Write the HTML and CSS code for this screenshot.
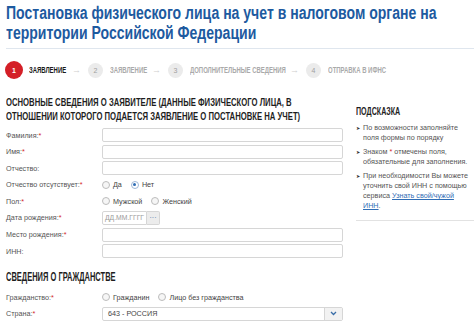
FILE: index.html
```html
<!DOCTYPE html>
<html lang="ru">
<head>
<meta charset="utf-8">
<title>Постановка физического лица на учет</title>
<link rel="stylesheet" href="styles.css">
</head>
<body>
<div class="page">
  <h1 class="title">
    <span class="tline">Постановка физического лица на учет в налоговом органе на</span>
    <span class="tline">территории Российской Федерации</span>
  </h1>
  <div class="steps">
    <span class="step-num active">1</span>
    <span class="step-label w1"><span class="sq">ЗАЯВЛЕНИЕ</span></span>
    <span class="arrow">→</span>
    <span class="step-num">2</span>
    <span class="step-label w2 muted"><span class="sq">ЗАЯВЛЕНИЕ</span></span>
    <span class="arrow">→</span>
    <span class="step-num">3</span>
    <span class="step-label w3 muted"><span class="sq">ДОПОЛНИТЕЛЬНЫЕ СВЕДЕНИЯ</span></span>
    <span class="arrow">→</span>
    <span class="step-num">4</span>
    <span class="step-label w4 muted"><span class="sq">ОТПРАВКА В ИФНС</span></span>
  </div>
  <div class="content">
    <div class="main">
      <h2 class="section">
        <span class="sline">ОСНОВНЫЕ СВЕДЕНИЯ О ЗАЯВИТЕЛЕ (ДАННЫЕ ФИЗИЧЕСКОГО ЛИЦА, В</span>
        <span class="sline">ОТНОШЕНИИ КОТОРОГО ПОДАЕТСЯ ЗАЯВЛЕНИЕ О ПОСТАНОВКЕ НА УЧЕТ)</span>
      </h2>
      <div class="form">
        <div class="label">Фамилия:<span class="req">*</span></div><div class="input"></div>
        <div class="label">Имя:<span class="req">*</span></div><div class="input"></div>
        <div class="label">Отчество:</div><div class="input"></div>
        <div class="label">Отчество отсутствует:<span class="req">*</span></div>
        <div class="radios"><span class="radio"></span><span class="rlabel">Да</span><span class="radio checked"></span><span class="rlabel">Нет</span></div>
        <div class="label">Пол:<span class="req">*</span></div>
        <div class="radios"><span class="radio"></span><span class="rlabel">Мужской</span><span class="radio"></span><span class="rlabel">Женский</span></div>
        <div class="label">Дата рождения:<span class="req">*</span></div>
        <div class="date"><span class="date-input">ДД.ММ.ГГГГ</span><span class="date-btn">···</span></div>
        <div class="label">Место рождения:<span class="req">*</span></div><div class="input"></div>
        <div class="label">ИНН:</div><div class="input"></div>
      </div>
      <h2 class="section section2"><span class="sline s2">СВЕДЕНИЯ О ГРАЖДАНСТВЕ</span></h2>
      <div class="form">
        <div class="label">Гражданство:<span class="req">*</span></div>
        <div class="radios"><span class="radio"></span><span class="rlabel">Гражданин</span><span class="radio"></span><span class="rlabel">Лицо без гражданства</span></div>
        <div class="label">Страна:<span class="req">*</span></div>
        <div class="select"><span class="select-text">643 - РОССИЯ</span><span class="select-btn"><svg width="7" height="5" viewBox="0 0 7 5"><path d="M1 1 L3.5 3.5 L6 1" fill="none" stroke="#3a6ea8" stroke-width="1.3"/></svg></span></div>
      </div>
    </div>
    <aside class="hint">
      <h3 class="hint-title"><span class="hq">ПОДСКАЗКА</span></h3>
      <ul class="hint-list">
        <li>По возможности заполняйте поля формы по порядку</li>
        <li>Знаком <span class="req">*</span> отмечены поля, обязательные для заполнения.</li>
        <li>При необходимости Вы можете уточнить свой ИНН с помощью сервиса <a href="#">Узнать свой/чужой ИНН</a>.</li>
      </ul>
    </aside>
  </div>
</div>
</body>
</html>
```
FILE: styles.css
```css
html, body {
  margin: 0;
  padding: 0;
  background: #fff;
}
.page {
  padding-left: 6px;
  font-family: "Liberation Sans", Arial, sans-serif;
  color: #444;
  overflow: hidden;
}
.title {
  margin: 0;
  padding: 3px 0 5px 0;
  font-family: "Liberation Sans", Arial, sans-serif;
  font-weight: bold;
  font-size: 18px;
  line-height: 20px;
  color: #1d5aa0;
  border-bottom: 1px solid #dfe6ee;
}
.tline {
  display: block;
  white-space: nowrap;
  transform: scaleX(0.78);
  transform-origin: 0 50%;
}
.steps {
  display: flex;
  align-items: center;
  height: 20px;
  margin-top: 11px;
  margin-left: -1px;
  font-size: 8.5px;
  font-weight: bold;
}
.step-num {
  flex: none;
  width: 15px;
  height: 15px;
  border-radius: 50%;
  background: #ebebeb;
  color: #a0a0a0;
  display: flex;
  align-items: center;
  justify-content: center;
  font-size: 7px;
  font-weight: normal;
  margin-right: 7px;
}
.step-num.active {
  width: 18px;
  height: 18px;
  background: #d41f27;
  color: #fff;
  font-weight: bold;
  margin-right: 6px;
}
.step-label {
  flex: none;
  white-space: nowrap;
  color: #1a1a1a;
}
.step-label.muted {
  color: #aaa;
}
.sq {
  display: inline-block;
  transform: scaleX(0.7);
  transform-origin: 0 50%;
}
.w1 { width: 38px; }
.w2 { width: 37px; }
.w3 { width: 95px; }
.w4 { width: 61px; }
.arrow {
  flex: none;
  width: 8px;
  color: #cfcfcf;
  font-size: 9px;
  font-weight: normal;
  margin: 0 8px 0 5px;
}
.content {
  display: flex;
  margin-top: 16px;
}
.main {
  flex: none;
  width: 337px;
}
.section {
  margin: 0;
  font-weight: bold;
  font-size: 11.5px;
  line-height: 13.5px;
  color: #1e1e1e;
}
.sline {
  display: block;
  white-space: nowrap;
  transform: scaleX(0.67);
  transform-origin: 0 50%;
}
.section2 {
  margin-top: 11px;
  font-size: 12.5px;
  line-height: 16px;
}
.s2 {
  transform: scaleX(0.6);
}
.form {
  display: grid;
  grid-template-columns: 96px 241px;
  grid-auto-rows: 14px;
  row-gap: 2.6px;
  margin-top: 5px;
  align-items: center;
}
.label {
  font-size: 7.2px;
  color: #555;
  white-space: nowrap;
}
.req {
  color: #d41f27;
}
.input {
  box-sizing: border-box;
  height: 14px;
  border: 1px solid #d6d6d6;
  border-radius: 2px;
  background: #fff;
}
.radios {
  display: flex;
  align-items: center;
  font-size: 7.2px;
  color: #444;
}
.radio {
  flex: none;
  width: 6px;
  height: 6px;
  border: 1px solid #bcbcbc;
  border-radius: 50%;
  margin: 0 3px 0 0;
  position: relative;
  background: #f6f6f6;
}
.radio.checked {
  border-color: #9fb8d8;
  background: #fff;
}
.radio.checked::after {
  content: "";
  position: absolute;
  left: 1.5px;
  top: 1.5px;
  width: 3px;
  height: 3px;
  border-radius: 50%;
  background: #2f6db5;
}
.rlabel {
  margin-right: 9px;
}
.date {
  display: flex;
  height: 14px;
}
.date-input {
  box-sizing: border-box;
  width: 45px;
  border: 1px solid #d6d6d6;
  border-radius: 2px 0 0 2px;
  font-size: 6.8px;
  color: #9a9a9a;
  display: flex;
  align-items: center;
  padding-left: 2px;
  white-space: nowrap;
  overflow: hidden;
}
.date-btn {
  box-sizing: border-box;
  width: 13px;
  border: 1px solid #d6d6d6;
  border-left: none;
  background: #ececec;
  color: #3a6ea8;
  font-size: 7px;
  display: flex;
  align-items: center;
  justify-content: center;
  border-radius: 0 2px 2px 0;
}
.select {
  box-sizing: border-box;
  display: flex;
  height: 14px;
  border: 1px solid #d6d6d6;
  border-radius: 2px;
  align-items: center;
}
.select-text {
  flex: 1;
  font-size: 7.2px;
  color: #444;
  padding-left: 5px;
}
.select-btn {
  width: 17px;
  height: 12px;
  border-left: 1px solid #d6d6d6;
  background: #f2f2f2;
  display: flex;
  align-items: center;
  justify-content: center;
}
.hint {
  flex: 1;
  box-sizing: border-box;
  margin-left: 13px;
  padding: 8px 4px 0 0;
  height: 125px;
  border-bottom: 1px solid #e2e2e2;
}
.hint-title {
  margin: 0 0 5px 0;
  font-weight: bold;
  font-size: 11.5px;
  line-height: 14px;
  color: #1e1e1e;
  white-space: nowrap;
}
.hq {
  display: inline-block;
  transform: scaleX(0.62);
  transform-origin: 0 50%;
}
.hint-list {
  list-style: none;
  margin: 0;
  padding: 0;
  font-size: 7.2px;
  line-height: 10px;
  color: #555;
}
.hint-list li {
  position: relative;
  padding-left: 7px;
  margin-bottom: 4px;
}
.hint-list li::before {
  content: "➤";
  position: absolute;
  left: 0;
  top: 0;
  font-family: "DejaVu Sans", sans-serif;
  font-size: 5px;
  color: #333;
}
.hint-list a {
  color: #2f6db5;
}
```
